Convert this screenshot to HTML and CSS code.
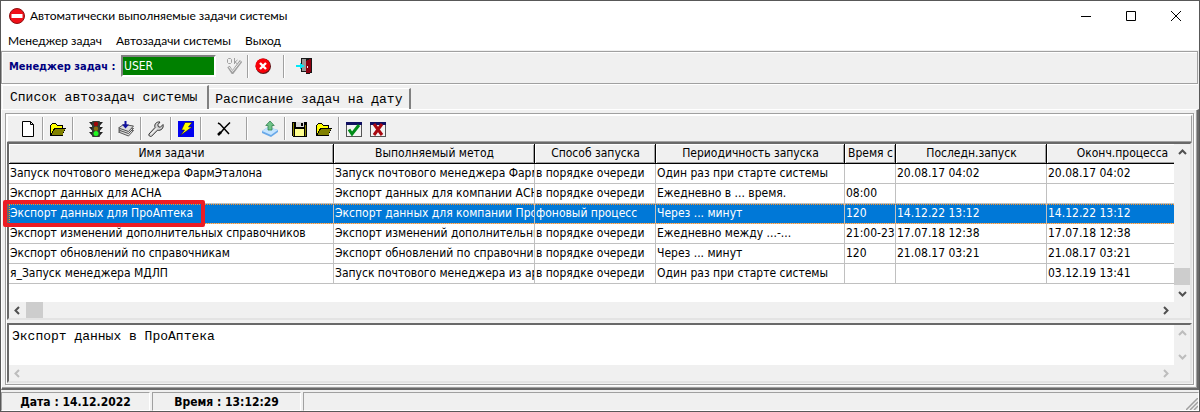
FILE: index.html
```html
<!DOCTYPE html>
<html lang="ru">

<head>
    <meta charset="utf-8">
    <meta name="viewport" content="width=device-width, initial-scale=1" />
    <title>Автоматически выполняемые задачи системы</title>
    <link rel="stylesheet" href="styles.css">
</head>

<body>
    <!-- shared icons -->
    <svg class="defs" aria-hidden="true">
        <symbol id="folder" viewBox="0 0 16 16">
            <path d="M0 4h1V3h1V2h4v1h1v1h6v3h3v1h-1v2h-1v2h-1v3H0z" fill="#000" />
            <path d="M1 4h1V3h4v1h1v1h5v2H4v1H3v2H2v2H1z" fill="#ff0" />
            <path d="M5 8h10v1h-1v2h-1v3H2v-2h1v-2h1V9h1z" fill="#808000" />
        </symbol>
        <symbol id="up" viewBox="0 0 9 9"><path d="M1 6l3.500-3.500L8 6" fill="none" stroke="currentColor" stroke-width="2" /></symbol>
        <symbol id="down" viewBox="0 0 9 9"><path d="M1 3l3.500 3.500L8 3" fill="none" stroke="currentColor" stroke-width="2" /></symbol>
        <symbol id="left" viewBox="0 0 9 9"><path d="M6 1L2.500 4.500L6 8" fill="none" stroke="currentColor" stroke-width="2" /></symbol>
        <symbol id="right" viewBox="0 0 9 9"><path d="M3 1l3.500 3.500L3 8" fill="none" stroke="currentColor" stroke-width="2" /></symbol>
    </svg>

    <div class="window">
        <header class="titlebar">
            <svg class="icon" viewBox="0 0 16 16">
                <circle cx="8" cy="8" r="7.500" fill="#f01018" stroke="#8c1010" />
                <rect x="2.500" y="6" width="11" height="4" fill="#fff" />
            </svg>
            <span class="caption">Автоматически выполняемые задачи системы</span>
            <button class="wb" aria-label="Свернуть"><svg viewBox="0 0 10 10"><path d="M0 5.500h10" /></svg></button>
            <button class="wb" aria-label="Развернуть"><svg viewBox="0 0 10 10"><path d="M.5.5h9v9h-9z" /></svg></button>
            <button class="wb" aria-label="Закрыть"><svg viewBox="0 0 10 10"><path d="M0 0l10 10M10 0L0 10" /></svg></button>
        </header>
        <nav class="menu">
            <button>Менеджер задач</button>
            <button>Автозадачи системы</button>
            <button>Выход</button>
        </nav>

        <div class="userbar">
            <label for="user">Менеджер задач :</label>
            <input id="user" value="USER">
            <button class="tb" aria-label="OK" disabled>
                <svg class="icon" viewBox="0 0 16 16" fill="none" stroke="#a0a0a0">
                    <path d="M2.500.5h2l1 1v3l-1 1h-2l-1-1v-3zM8.500 0v6M11.500 2L9 4l2.500 2" />
                    <path d="M2.500 8.500l4 6L15 3" stroke-width="3" />
                    <path d="M3 9l3.500 4.500L14.500 3.500" stroke="#f0f0f0" />
                </svg>
            </button>
            <i class="sep"></i>
            <button class="tb" aria-label="Отмена">
                <svg class="icon" viewBox="0 0 16 16">
                    <circle cx="8.300" cy="8.300" r="7.700" fill="#601418" />
                    <circle cx="7.800" cy="7.700" r="7.300" fill="#f80008" />
                    <path d="M5 5l6 6M11 5l-6 6" stroke="#fff" stroke-width="2.400" />
                </svg>
            </button>
            <i class="sep wide"></i>
            <button class="tb" aria-label="Выход">
                <svg class="icon" viewBox="0 0 16 16" shape-rendering="crispEdges">
                    <path d="M5 0h11v15h-2v1h-4v-2H5z" fill="#181818" />
                    <path d="M6 1h4v12H6z" fill="#989898" />
                    <path d="M10 3l4-2h1v13l-3 1h-2z" fill="#8c0010" />
                    <path d="M11 8h1v2h-1z" fill="#eee" />
                    <path d="M0 7h4V5h1v1h1v1h2v2H6v1H5v1H4V9H0z" fill="#00e8f8" />
                </svg>
            </button>
        </div>

        <div class="tabs" role="tablist">
            <button class="tab active" role="tab" aria-selected="true">Список автозадач системы</button>
            <button class="tab" role="tab" aria-selected="false">Расписание задач на дату</button>
        </div>

        <main class="sheet">
            <div class="group">
                <div class="toolbar">
                    <button class="tb" aria-label="Новая задача">
                        <svg class="icon" viewBox="0 0 16 16"><path d="M2.500.5h8l3 3v12h-11zM10.500.5v3h3" fill="#fff" stroke="#000" /></svg>
                    </button>
                    <i class="sep"></i>
                    <button class="tb" aria-label="Открыть"><svg class="icon crisp"><use href="#folder" /></svg></button>
                    <i class="sep wide"></i>
                    <button class="tb" aria-label="Светофор">
                        <svg class="icon" viewBox="0 0 16 16">
                            <path d="M1 1h14l-3 3.500H4zM1 6h14l-3 3.500H4zM1 11h14l-3 3.500H4z" fill="#222" />
                            <rect x="4" y="0" width="8" height="16" rx="1" fill="#333c33" />
                            <circle cx="8" cy="3" r="2.200" fill="#a00808" />
                            <circle cx="8" cy="7.800" r="2.200" fill="#8a7010" />
                            <circle cx="8" cy="12.600" r="2.500" fill="#20f820" />
                        </svg>
                    </button>
                    <i class="sep"></i>
                    <button class="tb" aria-label="Пакет">
                        <svg class="icon" viewBox="0 0 16 16" fill="#dcdcdc" stroke="#444" stroke-width=".9">
                            <path d="M.5 11l5-3.500 10 2-5 5.500z" />
                            <path d="M.5 9l5-3.500 10 2-5 5z" />
                            <path d="M.5 7l5-3.500 10 1.500-5 5.500z" />
                            <path d="M6.500 0h2v3.500H11L7.500 7.500 4 3.500h2.500z" fill="#1010a0" stroke="none" />
                        </svg>
                    </button>
                    <i class="sep"></i>
                    <button class="tb" aria-label="Настройка">
                        <svg class="icon" viewBox="0 0 16 16">
                            <path d="M1 13l6-6.500C6 3 8.500.5 12 1L9.800 3.800l.6 2 2 .4L15 3.500c1 3.500-2 6.500-5.500 5.700L3.500 15.300C2 16 .2 14.500 1 13z" fill="#d4d4d4" stroke="#333" />
                            <path d="M3 13.300l6-6" stroke="#fff" />
                        </svg>
                    </button>
                    <i class="sep"></i>
                    <button class="tb" aria-label="Выполнить">
                        <svg class="icon" viewBox="0 0 16 16">
                            <rect width="16" height="16" fill="#0000f0" />
                            <path d="M7 1.500h7L10.500 6H14L2.500 14.500 6.500 9H3.500z" fill="#ff0" stroke="#101030" stroke-width=".6" />
                        </svg>
                    </button>
                    <i class="sep"></i>
                    <button class="tb delete" aria-label="Удалить">
                        <svg class="icon" viewBox="0 0 16 16" fill="none" stroke="#000"><path d="M2 2l2 1 9 10M14 1.500L9 6.500l-5 6" stroke-width="1.500" /><path d="M2 14l3-3" stroke-width="2.500" /></svg>
                    </button>
                    <i class="sep wide"></i>
                    <button class="tb" aria-label="Выгрузить">
                        <svg class="icon" viewBox="0 0 16 16">
                            <path d="M0 10l6-4 10 3v2l-7 5-9-4z" fill="#68a8e8" />
                            <path d="M0 10l6-4 10 3-7 5z" fill="#c4e4ff" />
                            <path d="M6 9V4.500H3.800L8 0l4.200 4.500H10V9z" fill="#70c488" stroke="#328050" stroke-width=".8" />
                        </svg>
                    </button>
                    <i class="sep"></i>
                    <button class="tb" aria-label="Сохранить">
                        <svg class="icon crisp" viewBox="0 0 16 16">
                            <path d="M0 1h15v15H1v-1H0z" fill="#000" />
                            <path d="M1 2h1v13H1zM13 4h1v11h-1z" fill="#848000" />
                            <path d="M4 1h8v5H4z" fill="#d8d8d8" />
                            <path d="M9 2h2v3H9z" fill="#000" />
                            <path d="M3 8h9v7H3z" fill="#ffff90" />
                        </svg>
                    </button>
                    <button class="tb" aria-label="Загрузить"><svg class="icon crisp"><use href="#folder" /></svg></button>
                    <i class="sep"></i>
                    <button class="tb" aria-label="Включить">
                        <svg class="icon" viewBox="0 0 16 16">
                            <rect x=".5" y="1.500" width="15" height="14" fill="#f4f4f4" stroke="#555" />
                            <rect y="1" width="16" height="3" fill="#101060" />
                            <path d="M3 8.500l3 4.500L13 4" fill="none" stroke="#008c18" stroke-width="3" />
                        </svg>
                    </button>
                    <button class="tb" aria-label="Отключить">
                        <svg class="icon" viewBox="0 0 16 16">
                            <rect x=".5" y="1.500" width="15" height="14" fill="#f4f4f4" stroke="#555" />
                            <rect y="1" width="16" height="3" fill="#101060" />
                            <path d="M4 3l8 11M12 3L4 14" stroke="#a80810" stroke-width="3" />
                        </svg>
                    </button>
                </div>

                <div class="sunken grid">
                    <div class="view">
                        <table>
                            <colgroup>
                                <col class="c-name"><col class="c-method"><col class="c-way"><col class="c-period">
                                <col class="c-time"><col class="c-date"><col class="c-date">
                            </colgroup>
                            <thead>
                                <tr>
                                    <th>Имя задачи</th>
                                    <th>Выполняемый метод</th>
                                    <th>Способ запуска</th>
                                    <th>Периодичность запуска</th>
                                    <th>Время с</th>
                                    <th>Последн.запуск</th>
                                    <th>Оконч.процесса</th>
                                </tr>
                            </thead>
                            <tbody>
                                <tr>
                                    <td>Запуск почтового менеджера ФармЭталона</td>
                                    <td>Запуск почтового менеджера ФармЭталона</td>
                                    <td>в порядке очереди</td>
                                    <td>Один раз при старте системы</td>
                                    <td></td>
                                    <td>20.08.17 04:02</td>
                                    <td>20.08.17 04:02</td>
                                </tr>
                                <tr>
                                    <td>Экспорт данных для АСНА</td>
                                    <td>Экспорт данных для компании АСНА</td>
                                    <td>в порядке очереди</td>
                                    <td>Ежедневно в ... время.</td>
                                    <td>08:00</td>
                                    <td></td>
                                    <td></td>
                                </tr>
                                <tr class="selected">
                                    <td>Экспорт данных для ПроАптека</td>
                                    <td>Экспорт данных для компании ПроАптека</td>
                                    <td>фоновый процесс</td>
                                    <td>Через ... минут</td>
                                    <td>120</td>
                                    <td>14.12.22 13:12</td>
                                    <td>14.12.22 13:12</td>
                                </tr>
                                <tr>
                                    <td>Экспорт изменений дополнительных справочников</td>
                                    <td>Экспорт изменений дополнительных</td>
                                    <td>в порядке очереди</td>
                                    <td>Ежедневно между ...-...</td>
                                    <td>21:00-23:00</td>
                                    <td>17.07.18 12:38</td>
                                    <td>17.07.18 12:38</td>
                                </tr>
                                <tr>
                                    <td>Экспорт обновлений по справочникам</td>
                                    <td>Экспорт обновлений по справочникам</td>
                                    <td>в порядке очереди</td>
                                    <td>Через ... минут</td>
                                    <td>120</td>
                                    <td>21.08.17 03:21</td>
                                    <td>21.08.17 03:21</td>
                                </tr>
                                <tr>
                                    <td>я_Запуск менеджера МДЛП</td>
                                    <td>Запуск почтового менеджера из архива</td>
                                    <td>в порядке очереди</td>
                                    <td>Один раз при старте системы</td>
                                    <td></td>
                                    <td></td>
                                    <td>03.12.19 13:41</td>
                                </tr>
                            </tbody>
                        </table>
                    </div>
                    <div class="vscroll">
                        <button aria-label="Вверх"><svg><use href="#up" /></svg></button>
                        <i class="thumb end"></i>
                        <button aria-label="Вниз"><svg><use href="#down" /></svg></button>
                    </div>
                    <div class="hscroll">
                        <button aria-label="Влево"><svg><use href="#left" /></svg></button>
                        <i class="thumb"></i>
                        <button class="last" aria-label="Вправо"><svg><use href="#right" /></svg></button>
                    </div>
                    <div class="marker"></div>
                </div>

                <div class="sunken memo">
                    <textarea aria-label="Описание задачи" rows="2" spellcheck="false">Экспорт данных в ПроАптека</textarea>
                    <div class="vscroll">
                        <button aria-label="Вверх" disabled><svg><use href="#up" /></svg></button>
                        <button aria-label="Вниз" disabled><svg><use href="#down" /></svg></button>
                    </div>
                    <div class="hscroll">
                        <button aria-label="Влево" disabled><svg><use href="#left" /></svg></button>
                        <button class="last" aria-label="Вправо" disabled><svg><use href="#right" /></svg></button>
                    </div>
                </div>
            </div>
        </main>

        <footer class="status">
            <span>Дата : 14.12.2022</span>
            <span>Время : 13:12:29</span>
            <span class="rest"><svg class="grip" viewBox="0 0 12 12"><path d="M0 12L12 0M4 12l8-8M8 12l4-4" /></svg></span>
        </footer>
    </div>
</body>

</html>
```
FILE: styles.css
```css
* {
    box-sizing: border-box;
}

body {
    margin: 0;
    font: 12px "DejaVu Sans Condensed", "DejaVu Sans", sans-serif;
    color: #000;
    background: #f0f0f0;
}

button {
    margin: 0;
    padding: 0;
    border: 0;
    background: none;
    font: inherit;
    color: inherit;
}

.defs {
    display: none;
}

.window {
    display: flex;
    flex-direction: column;
    min-height: 100vh;
    border: 1px solid #585858;
}

.icon {
    width: 16px;
    height: 16px;
    display: block;
}

.crisp {
    shape-rendering: crispEdges;
}

/* title and menu */
.titlebar {
    display: flex;
    align-items: center;
    height: 29px;
    padding: 0 1px 0 8px;
    background: #fff;
    font-family: Lato, sans-serif;
}

.caption {
    flex: 1;
    padding-left: 5px;
}

.wb {
    width: 45px;
    height: 29px;
    display: flex;
    align-items: center;
    justify-content: center;
}

.wb svg {
    width: 10px;
    height: 10px;
    fill: none;
    stroke: #000;
}

.menu {
    display: flex;
    align-items: center;
    gap: 14px;
    height: 20px;
    padding-left: 7px;
    background: #fff;
    font-family: Lato, sans-serif;
}

/* user bar */
.userbar {
    display: flex;
    align-items: center;
    height: 33px;
    margin: 1px 1px 1px 0;
    padding: 0 0 3px 7px;
    border: 1px solid #a0a0a0;
    box-shadow: inset 1px 1px #fff, 0 1px #fff;
}

.userbar label {
    width: 112px;
    font-weight: bold;
    font-size: 11px;
    color: #000080;
    white-space: nowrap;
}

.userbar input {
    width: 95px;
    height: 22px;
    margin-right: 6px;
    padding: 0 1px;
    border: 2px solid;
    border-color: #808080 #fff #fff #808080;
    background: #008000;
    color: #fff;
    font: inherit;
}

.tb {
    width: 24px;
    height: 24px;
    display: flex;
    align-items: center;
    justify-content: center;
}

.sep {
    width: 2px;
    height: 23px;
    margin: 0 2px;
    border-left: 1px solid #a0a0a0;
    border-right: 1px solid #fff;
}

.sep.wide {
    margin: 0 10px 0 2px;
}

.delete {
    margin: 0 8px;
}

.userbar .sep {
    margin: 0 2px 0 1px;
}

.userbar .sep.wide {
    margin: 0 7px 0 8px;
}

/* tabs */
.tabs {
    display: flex;
    align-items: flex-end;
    height: 24px;
    padding-left: 1px;
    font: 13px "Liberation Mono", monospace;
}

.tab {
    height: 21px;
    padding: 0 7px 0 6px;
    border-right: 2px solid #808080;
    border-top: 1px solid #fff;
    box-shadow: inset 0 -1px #fff;
}

.tab.active {
    height: 24px;
    padding: 0 10px 1px 7px;
    border-left: 1px solid #fff;
    box-shadow: none;
}

.sheet {
    flex: 1;
    display: flex;
    padding: 3px;
    border: 1px solid #fff;
    border-right: 2px solid #696969;
    border-bottom: 2px solid #696969;
    box-shadow: inset -1px -1px #a0a0a0;
}

.group {
    flex: 1;
    min-width: 0;
    display: flex;
    flex-direction: column;
    padding: 1px;
    border: 1px solid #a0a0a0;
    box-shadow: inset 1px 1px #fff, 1px 1px #fff;
}

.toolbar {
    display: flex;
    align-items: center;
    height: 27px;
    padding-left: 8px;
    border: 1px solid;
    border-color: #fff #a0a0a0 #a0a0a0 #fff;
}

.sunken {
    display: grid;
    grid-template-columns: 1fr 16px;
    border: 2px solid;
    border-color: #696969 #e3e3e3 #e3e3e3 #696969;
    background: #f0f0f0;
}

/* task grid */
.grid {
    position: relative;
    flex: 1;
    grid-template-rows: 1fr 16px;
}

.view {
    overflow: hidden;
    background: #fff;
}

table {
    width: 1189px;
    table-layout: fixed;
    border-spacing: 0;
}

.c-name {
    width: 325px;
}

.c-method {
    width: 201px;
}

.c-way {
    width: 121px;
}

.c-period {
    width: 189px;
}

.c-time {
    width: 51px;
}

.c-date {
    width: 151px;
}

th,
td {
    height: 20px;
    padding: 0 0 0 1px;
    line-height: 19px;
    overflow: hidden;
    white-space: nowrap;
    text-align: left;
    font-weight: normal;
    border-right: 1px solid #c0c0c0;
    border-bottom: 1px solid #c0c0c0;
}

th {
    text-align: center;
    background: #f0f0f0;
    border-color: #000;
    box-shadow: inset 1px 1px #fff, inset -1px -1px #a0a0a0;
}

.selected td {
    background: #0078d7;
    color: #fff;
}

.selected {
    outline: 1px dotted #ff9020;
    outline-offset: -1px;
}

.marker {
    position: absolute;
    left: -6px;
    top: 56px;
    width: 202px;
    height: 27px;
    border: 4px solid #ed1c24;
    border-radius: 2px;
}

/* scroll bars */
.vscroll,
.hscroll {
    display: flex;
    color: #505050;
}

.vscroll {
    flex-direction: column;
    justify-content: space-between;
}

.vscroll button,
.hscroll button {
    width: 17px;
    height: 17px;
    display: flex;
    align-items: center;
    justify-content: center;
}

.hscroll button {
    height: 16px;
}

.vscroll svg,
.hscroll svg {
    width: 9px;
    height: 9px;
}

.vscroll button:disabled,
.hscroll button:disabled {
    color: #bdbdbd;
}

.thumb {
    width: 17px;
    height: 16px;
    background: #cdcdcd;
}

.thumb.end {
    width: 16px;
    height: 17px;
    margin-top: auto;
}

.last {
    margin-left: auto;
}

/* task description */
.memo {
    margin-top: 3px;
}

.memo textarea {
    height: 40px;
    padding: 4px 3px;
    border: 0;
    resize: none;
    overflow: hidden;
    background: #fff;
    font: 13px/15px "Liberation Mono", monospace;
}

/* status bar */
.status {
    display: flex;
    gap: 2px;
    height: 21px;
    padding-top: 2px;
    font-weight: bold;
}

.status span {
    width: 149px;
    text-align: center;
    line-height: 18px;
    border: 1px solid;
    border-color: #a0a0a0 #fff #fff #a0a0a0;
}

.status .rest {
    flex: 1;
    display: flex;
    align-items: flex-end;
    justify-content: flex-end;
}

.grip {
    width: 12px;
    height: 12px;
    stroke: #a0a0a0;
    stroke-width: 1.5;
}
```
